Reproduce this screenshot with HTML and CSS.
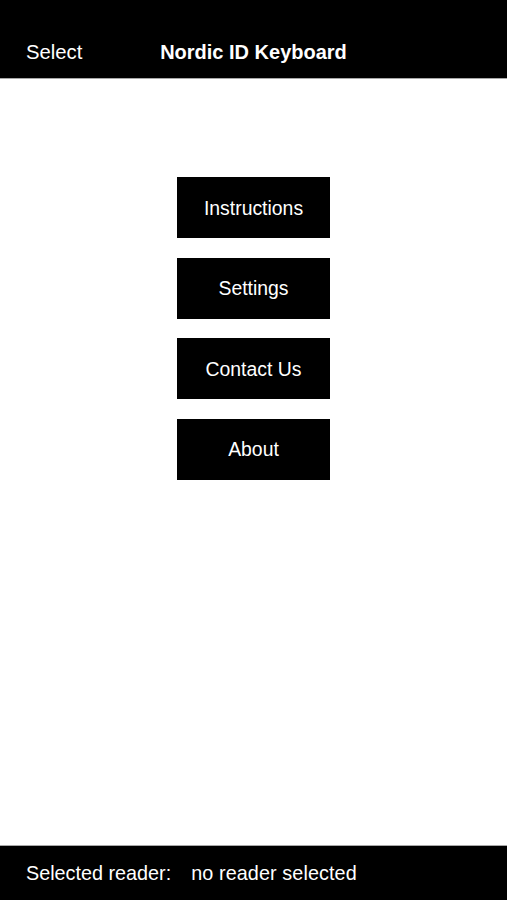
FILE: index.html
```html
<!DOCTYPE html>
<html lang="en">
  <head>
    <meta charset="UTF-8" />
    <meta name="viewport" content="width=device-width, initial-scale=1.0" />
    <title>Nordic ID Keyboard</title>
    <link rel="stylesheet" href="styles.css">
  </head>
  <body>
    <div class="app">
      <div class="nav-bar">
        <span class="nav-left">Select</span>
        <span class="nav-title">Nordic ID Keyboard</span>
      </div>
      <div class="menu">
        <button class="menu-button">Instructions</button>
        <button class="menu-button">Settings</button>
        <button class="menu-button">Contact Us</button>
        <button class="menu-button">About</button>
      </div>
      <div class="status-bar">
        <span class="status-label">Selected reader:</span>
        <span class="status-value">no reader selected</span>
      </div>
    </div>
  </body>
</html>
```

FILE: styles.css
```css
* {
  margin: 0;
  padding: 0;
  box-sizing: border-box;
}
body {
  font-family: "Liberation Sans", Arial, sans-serif;
  background-color: #fff;
}
.app {
  display: flex;
  flex-direction: column;
  height: 900px;
}
.nav-bar {
  position: relative;
  height: 79px;
  background-color: #000;
  border-bottom: 1px solid #a8a8a8;
  color: #fff;
  display: flex;
  align-items: center;
  padding: 26px 0 0 26px;
}
.nav-left {
  font-size: 20.3px;
}
.nav-title {
  position: absolute;
  left: 0;
  right: 0;
  top: 41px;
  text-align: center;
  font-size: 20px;
  font-weight: bold;
}
.menu {
  flex: 1;
  display: flex;
  flex-direction: column;
  align-items: center;
  gap: 19.5px;
  padding-top: 98px;
}
.menu-button {
  width: 153px;
  height: 61px;
  padding-top: 1px;
  background-color: #000;
  color: #fff;
  border: none;
  font-family: "Liberation Sans", Arial, sans-serif;
  font-size: 19.4px;
}
.status-bar {
  height: 55px;
  background-color: #000;
  border-top: 1px solid #a8a8a8;
  color: #fff;
  display: flex;
  align-items: center;
  padding-left: 26px;
  font-size: 19.8px;
  gap: 20px;
}
.status-value {
  letter-spacing: 0.1px;
}
```
